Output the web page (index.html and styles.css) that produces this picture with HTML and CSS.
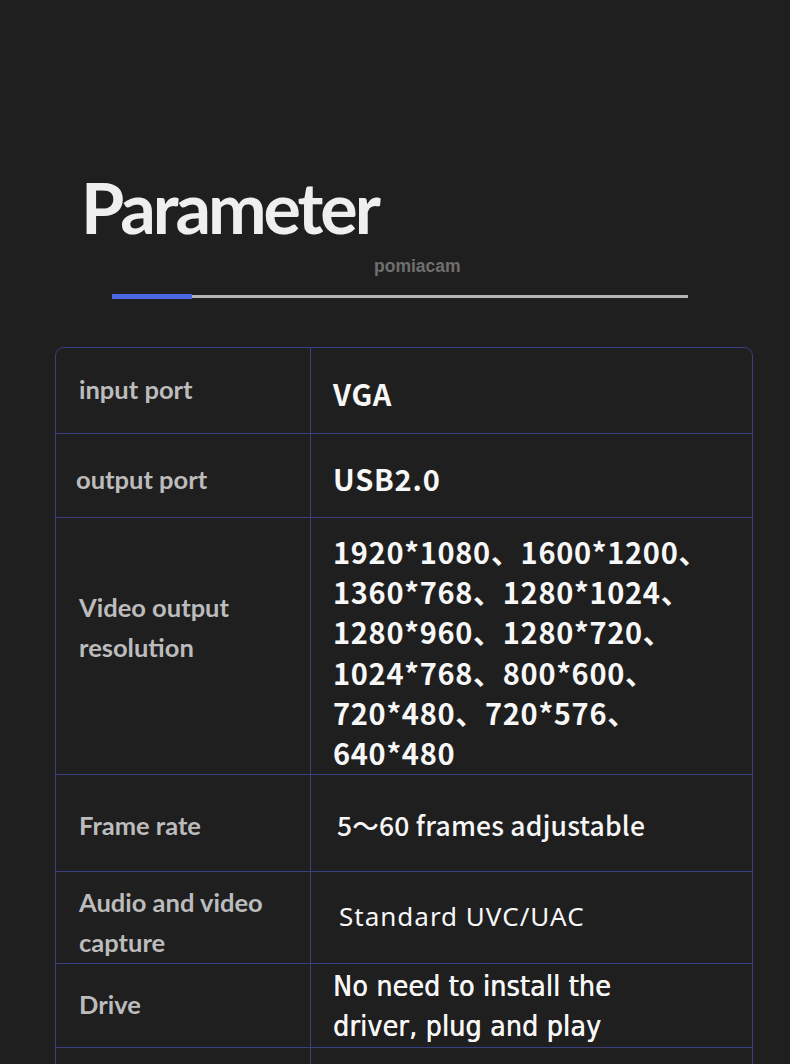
FILE: index.html
```html
<!DOCTYPE html>
<html lang="en">
<head>
<meta charset="utf-8">
<title>Parameter</title>
<link rel="stylesheet" href="styles.css">
</head>
<body>
<div class="page">
  <header class="head">
    <h1 class="title">Parameter</h1>
    <div class="brand">pomiacam</div>
    <div class="track"><span class="track-fill"></span></div>
  </header>

  <div class="table">
    <div class="cell key r1">input port</div>
    <div class="cell val strong r1v">VGA</div>

    <div class="cell key r2">output port</div>
    <div class="cell val strong r2v">USB2.0</div>

    <div class="cell key r3">Video output<br>resolution</div>
    <div class="cell val list r3v">1920*1080、1600*1200、<br>1360*768、1280*1024、<br>1280*960、1280*720、<br>1024*768、800*600、<br>720*480、720*576、<br>640*480</div>

    <div class="cell key r4">Frame rate</div>
    <div class="cell val rounded r4v">5～60 frames adjustable</div>

    <div class="cell key r5">Audio and video<br>capture</div>
    <div class="cell val thin r5v">Standard UVC/UAC</div>

    <div class="cell key r6">Drive</div>
    <div class="cell val narrow r6v">No need to install the<br>driver, plug and play</div>

    <div class="cell key r7"></div>
    <div class="cell val r7v"></div>
  </div>
</div>
</body>
</html>
```
FILE: styles.css
```css
* { box-sizing: border-box; }
html, body {
  margin: 0;
  padding: 0;
  background: #1f1f1f;
}
body {
  width: 790px;
  height: 1064px;
  overflow: hidden;
  font-family: "Lato", "Noto Sans", sans-serif;
}
.page {
  padding-top: 171px;
}
.head {
  display: flex;
  flex-direction: column;
}
.title {
  margin: 0 0 0 81px;
  font-family: "Lato", sans-serif;
  font-weight: 700;
  font-size: 70px;
  line-height: 72px;
  color: #efefef;
  letter-spacing: -3px;
}
.brand {
  margin: 13px 0 0 374px;
  font-family: "Liberation Sans", Arial, sans-serif;
  font-weight: 700;
  font-size: 17.5px;
  line-height: 20px;
  color: #6f6f6f;
}
.track {
  margin: 19px 0 0 112px;
  width: 576px;
  height: 3px;
  background: #b4b4b4;
  display: flex;
  align-items: center;
}
.track-fill {
  display: block;
  width: 80px;
  height: 5px;
  background: #4d66e4;
}
.table {
  margin: 49px 0 0 55px;
  width: 698px;
  border: 1px solid #3a3f82;
  border-radius: 9px;
  display: grid;
  grid-template-columns: 255px 1fr;
  grid-template-rows: 86px 84px 257px 97px 92px 84px 90px;
}
.cell {
  border-bottom: 1px solid #3a3f82;
  display: flex;
  align-items: center;
}
.key {
  border-right: 1px solid #3a3f82;
  padding-left: 23px;
  font-family: "Lato", sans-serif;
  font-weight: 700;
  font-size: 25.5px;
  line-height: 40px;
  color: #bcbcbc;
}
.val {
  padding-left: 22px;
  color: #f7f7f7;
}
.strong {
  font-family: "Noto Sans CJK SC", "Noto Sans", sans-serif;
  font-weight: 700;
  font-size: 29px;
  letter-spacing: 0.8px;
}
.list {
  align-items: flex-start;
  padding-top: 13px;
  font-family: "Noto Sans CJK SC", sans-serif;
  font-weight: 700;
  font-size: 29px;
  line-height: 40.2px;
  letter-spacing: 0.7px;
}
.rounded {
  padding-left: 26px;
  font-family: "Noto Sans CJK JP", sans-serif;
  font-weight: 500;
  font-size: 26.5px;
  letter-spacing: 0.2px;
}
.thin {
  padding-left: 28px;
  font-family: "Noto Sans", sans-serif;
  font-weight: 400;
  font-size: 26px;
  letter-spacing: 1px;
}
.narrow {
  font-family: "DejaVu Sans Condensed", "DejaVu Sans", sans-serif;
  font-stretch: condensed;
  font-weight: 400;
  font-size: 28px;
  line-height: 40px;
  letter-spacing: 0.3px;
  text-shadow: 0.6px 0 0 #f7f7f7;
}
.r1 { padding-bottom: 4px; }
.r1v { padding-top: 4px; }
.r2 { padding-top: 6px; padding-left: 20px; }
.r2v { padding-top: 4px; }
.r3 { padding-bottom: 38px; }
.r4 { padding-top: 4px; }
.r4v { padding-top: 2px; }
.r5 { padding-top: 8px; }
.r5v { padding-bottom: 4px; }
.r6 { padding-bottom: 4px; }
.r6v { padding-top: 2px; }
.r7, .r7v { border-bottom: none; }
```
